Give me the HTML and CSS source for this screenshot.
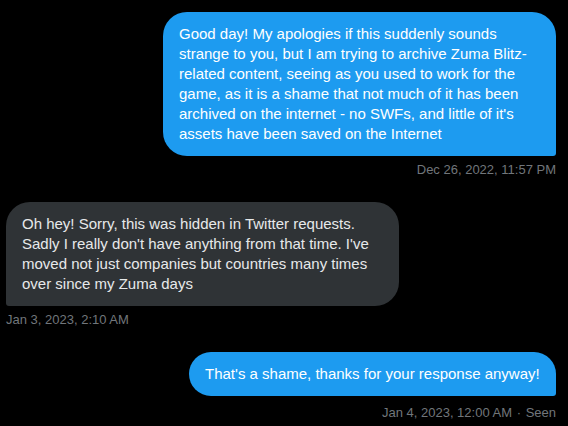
FILE: index.html
```html
<!DOCTYPE html>
<html lang="en">
<head>
<meta charset="utf-8">
<title>Messages</title>
<link rel="stylesheet" href="styles.css">
</head>
<body>
<div class="thread">
  <div class="msg sent">
    <div class="bubble b1">Good day! My apologies if this suddenly sounds<br>strange to you, but I am trying to archive Zuma Blitz-<br>related content, seeing as you used to work for the<br>game, as it is a shame that not much of it has been<br>archived on the internet - no SWFs, and little of it's<br>assets have been saved on the Internet</div>
    <div class="meta">Dec 26, 2022, 11:57 PM</div>
  </div>
  <div class="msg recv">
    <div class="bubble b2">Oh hey! Sorry, this was hidden in Twitter requests.<br>Sadly I really don't have anything from that time. I've<br>moved not just companies but countries many times<br>over since my Zuma days</div>
    <div class="meta">Jan 3, 2023, 2:10 AM</div>
  </div>
  <div class="msg sent">
    <div class="bubble b3">That's a shame, thanks for your response anyway!</div>
    <div class="meta seen">Jan 4, 2023, 12:00 AM <span class="dot">·</span> Seen</div>
  </div>
</div>
</body>
</html>
```
FILE: styles.css
```css
html, body {
  margin: 0;
  padding: 0;
  background: #000;
}
body {
  font-family: "Liberation Sans", Arial, sans-serif;
  width: 568px;
  height: 426px;
  overflow: hidden;
}
.thread {
  display: flex;
  flex-direction: column;
  gap: 24px;
  padding: 12px 12px 0 6px;
}
.msg {
  display: flex;
  flex-direction: column;
}
.msg.sent { align-items: flex-end; }
.msg.recv { align-items: flex-start; }
.bubble {
  box-sizing: border-box;
  padding: 12px 16px;
  font-size: 15px;
  line-height: 20px;
  white-space: nowrap;
  border-radius: 24px;
}
.sent .bubble {
  background: #1d9bf0;
  color: #fff;
  border-bottom-right-radius: 3px;
}
.recv .bubble {
  background: #2f3336;
  color: #e7e9ea;
  border-bottom-left-radius: 3px;
}
.b1 { width: 393px; }
.b2 { width: 393px; }
.b3 { width: 367px; border-radius: 22px; border-bottom-right-radius: 3px; }
.meta {
  margin-top: 6px;
  font-size: 13px;
  line-height: 16px;
  color: #71767b;
  white-space: nowrap;
}
.meta.seen { margin-top: 9px; }
.dot { padding: 0 1px; }
```
